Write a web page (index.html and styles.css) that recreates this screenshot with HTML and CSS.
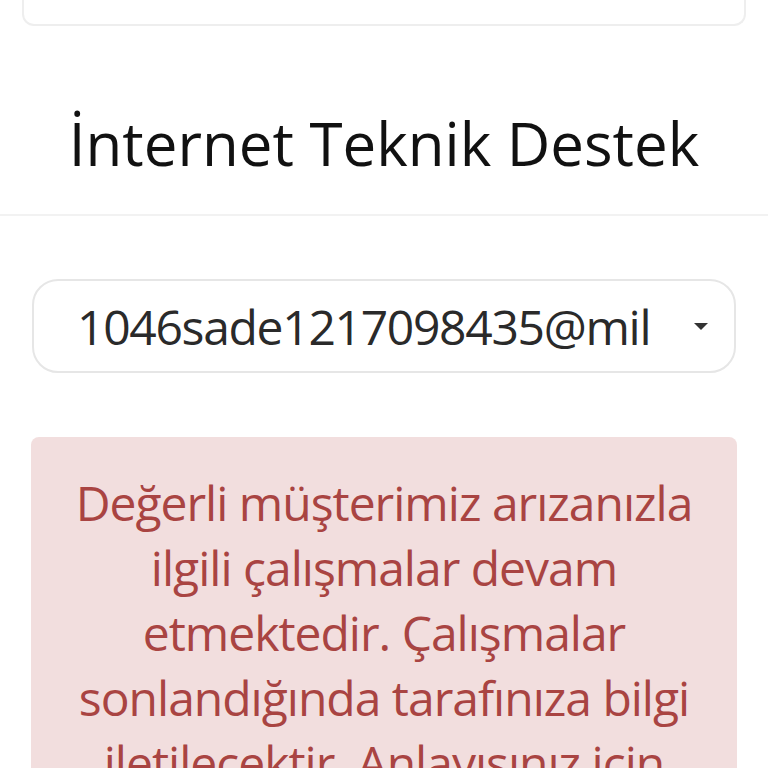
FILE: index.html
```html
<!doctype html>
<html lang="tr">
  <head>
    <meta charset="UTF-8" />
    <meta name="viewport" content="width=device-width, initial-scale=1.0" />
    <title>İnternet Teknik Destek</title>
    <link rel="stylesheet" href="styles.css">
  </head>
  <body>
    <!-- Önceki kart (ekranın üstünde kalan kısım) -->
    <div class="top-card"></div>

    <!-- Başlık -->
    <header class="page-header">
      <h1 class="page-title">İnternet Teknik Destek</h1>
    </header>

    <main class="content">
      <!-- Hesap seçimi -->
      <div class="account-select">
        <span class="account-value">1046sade1217098435@mil</span>
        <span class="caret"></span>
      </div>

      <!-- Arıza bildirimi -->
      <div class="alert alert-danger">
        Değerli müşterimiz arızanızla ilgili çalışmalar devam etmektedir. Çalışmalar sonlandığında tarafınıza bilgi iletilecektir. Anlayışınız için teşekkür ederiz.
      </div>
    </main>
  </body>
</html>
```

FILE: styles.css
```css
/* Genel */
html, body {
  height: 100%;
  overflow: hidden;
}

body {
  margin: 0;
  background: #fff;
  font-family: "Open Sans", "Noto Sans", sans-serif;
  color: #111;
}

/* Üstteki kart */
.top-card {
  height: 24px;
  margin: 0 22px;
  border: 2px solid #eeeeee;
  border-top: none;
  border-radius: 0 0 12px 12px;
}

/* Başlık */
.page-header {
  padding: 76px 0 30px;
  border-bottom: 2px solid #f2f2f2;
  text-align: center;
}

.page-title {
  margin: 0;
  font-size: 60px;
  font-weight: 400;
  line-height: 82px;
  color: #111;
}

/* İçerik */
.content {
  padding: 63px 31px 0;
}

.account-select {
  display: flex;
  align-items: center;
  justify-content: space-between;
  height: 90px;
  margin: 0 1px;
  padding: 0 26px 0 43px;
  border: 2px solid #e6e6e6;
  border-radius: 26px;
  background: #fff;
}

.account-value {
  font-size: 48px;
  letter-spacing: -1.3px;
  color: #2a2a2a;
  white-space: nowrap;
  overflow: hidden;
}

.caret {
  width: 0;
  height: 0;
  border-left: 7px solid transparent;
  border-right: 7px solid transparent;
  border-top: 7px solid #333;
}

/* Uyarı kutusu */
.alert {
  margin-top: 64px;
  padding: 33px 30px;
  border-radius: 8px;
  font-size: 48px;
  letter-spacing: -1px;
  line-height: 65px;
  text-align: center;
}

.alert-danger {
  background: #f2dede;
  color: #a94442;
}
```
